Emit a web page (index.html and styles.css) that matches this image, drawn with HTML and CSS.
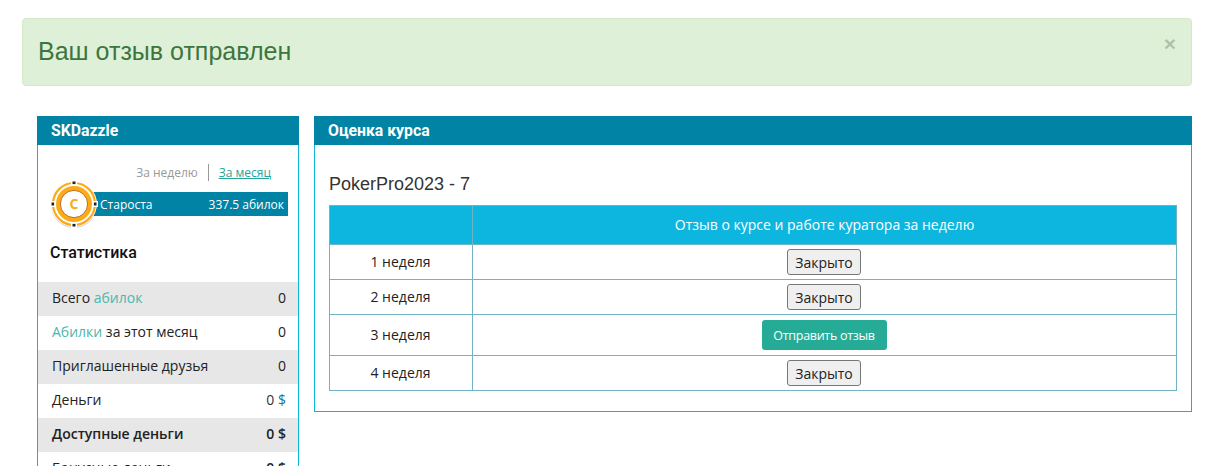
FILE: index.html
```html
<!DOCTYPE html>
<html lang="ru">
<head>
<meta charset="utf-8">
<title>Оценка курса</title>
<link rel="stylesheet" href="styles.css">
</head>
<body>
<div class="page">
  <div class="alert">
    <span class="alert-text">Ваш отзыв отправлен</span>
    <span class="alert-close">×</span>
  </div>
  <div class="columns">
    <aside class="panel side">
      <div class="panel-head">SKDazzle</div>
      <div class="tabs">
        <span class="tab">За неделю</span>
        <a class="tab tab-link">За месяц</a>
      </div>
      <div class="rank">
        <div class="rank-bar"><span>Староста</span><span>337.5 абилок</span></div>
        <svg class="chip" viewBox="0 0 48 48" width="48" height="48">
          <circle cx="24" cy="25" r="23" fill="#000" opacity=".18"/>
          <circle cx="24" cy="24" r="23" fill="#fff"/>
          <circle cx="24" cy="24" r="21" fill="none" stroke="#fbab18" stroke-width="2.2"/>
          <circle cx="24" cy="24" r="18" fill="#fbab18"/>
          <circle cx="24" cy="24" r="13.6" fill="#fff" stroke="#bf6d22" stroke-width="1"/>
          <rect x="21" y="0" width="6" height="5" fill="#fff"/>
          <rect x="21" y="43" width="6" height="5" fill="#fff"/>
          <rect x="0" y="21" width="5" height="6" fill="#fff"/>
          <rect x="43" y="21" width="5" height="6" fill="#fff"/>
          <rect x="22.5" y="1.5" width="3" height="2.6" fill="#222"/>
          <rect x="22.5" y="43.9" width="3" height="2.6" fill="#222"/>
          <rect x="1.5" y="22.5" width="2.6" height="3" fill="#222"/>
          <rect x="43.9" y="22.5" width="2.6" height="3" fill="#222"/>
          <text x="24" y="29" class="chip-letter" text-anchor="middle">C</text>
        </svg>
      </div>
      <h4 class="stat-title">Статистика</h4>
      <ul class="stats">
        <li class="stat grey"><span>Всего <a class="accent">абилок</a></span><span>0</span></li>
        <li class="stat"><span><a class="accent">Абилки</a> за этот месяц</span><span>0</span></li>
        <li class="stat grey"><span>Приглашенные друзья</span><span>0</span></li>
        <li class="stat"><span>Деньги</span><span class="money">0 <a class="blue">$</a></span></li>
        <li class="stat grey strong"><span>Доступные деньги</span><span>0 $</span></li>
        <li class="stat"><span>Бонусные деньги</span><span class="strong">0 $</span></li>
      </ul>
    </aside>
    <main class="panel main">
      <div class="panel-head">Оценка курса</div>
      <div class="panel-body">
        <h3 class="course">PokerPro2023 - 7</h3>
        <table class="weeks">
          <thead>
            <tr><th class="col-week"></th><th>Отзыв о курсе и работе куратора за неделю</th></tr>
          </thead>
          <tbody>
            <tr><td>1 неделя</td><td><button class="btn-closed">Закрыто</button></td></tr>
            <tr><td>2 неделя</td><td><button class="btn-closed">Закрыто</button></td></tr>
            <tr><td>3 неделя</td><td><button class="btn-send">Отправить отзыв</button></td></tr>
            <tr><td>4 неделя</td><td><button class="btn-closed">Закрыто</button></td></tr>
          </tbody>
        </table>
      </div>
    </main>
  </div>
</div>
</body>
</html>
```
FILE: styles.css
```css
* { box-sizing: border-box; }
html, body { margin: 0; height: 466px; overflow: hidden; background: #fff; }
body { font-family: "Open Sans", sans-serif; font-size: 14px; color: #222; }
.page { padding: 18px 25px 0 22px; }
.alert {
  height: 68px; display: flex; align-items: center; justify-content: space-between;
  padding: 0 15px; background: #dff0d8; border: 1px solid #d6e9c6; border-radius: 4px; color: #3c763d;
}
.alert-text { font-family: "Liberation Sans", sans-serif; font-size: 25px; padding-bottom: 1px; }
.alert-close { font-family: "Liberation Sans", sans-serif; font-size: 21px; font-weight: 700; color: #000; opacity: .2; margin: -16px 0 0; }
.columns { display: flex; gap: 15px; margin: 30px 0 0 15px; align-items: flex-start; }
.panel { border: 1px solid #0db6de; background: #fff; }
.side { width: 262px; flex: none; }
.main { flex: 1; height: 296px; }
.panel-head {
  height: 29px; margin: -1px -1px 0; padding: 0 14px; background: #0083a5; color: #fff;
  font-family: Roboto, sans-serif; font-weight: 700; font-size: 15.8px; line-height: 29px;
}
.tabs { display: flex; justify-content: flex-end; padding: 19px 27px 0 0; height: 36px; font-size: 12px; }
.tab { color: #999; line-height: 18px; padding: 0 10px; }
.tab-link { color: #26a69a; text-decoration: underline; border-left: 1px solid #999; padding-right: 0; }
.rank { position: relative; margin: 11px 10px 0 12px; height: 24px; padding-left: 30px; }
.chip { position: absolute; left: 0; top: -12px; }
.chip-letter { font-weight: 700; font-size: 14px; fill: #fbab18; }
.rank-bar {
  height: 24px; background: #0083a5; color: #fff; display: flex; justify-content: space-between;
  align-items: center; font-size: 12px; padding: 0 4px 0 20px;
}
.stat-title { margin: 28px 0 0 12px; font-family: Roboto, sans-serif; font-weight: 500; font-size: 16px; line-height: 18px; color: #111; }
.stats { list-style: none; margin: 20px 0 0; padding: 0; }
.stat { height: 34px; display: flex; align-items: center; justify-content: space-between; padding: 0 12px 4px 14px; }
.grey { background: #e7e7e7; }
.strong { font-weight: 600; }
.accent { color: #4db6ac; }
.blue { color: #2b6f8f; }
.money { color: #333; }
.panel-body { padding: 29px 14px 0; }
.course { margin: 0; font-family: "Liberation Sans", sans-serif; font-weight: 400; font-size: 18px; line-height: 20px; color: #333; }
.weeks { width: 100%; margin-top: 11px; border-collapse: collapse; border: 1px solid #6fb3c5; }
.weeks th { height: 39px; padding: 0 0 2px; background: #0db6de; color: #fff; font-weight: 400; border-left: 1px solid #6fb3c5; border-bottom: 1px solid #6fb3c5; text-align: center; }
.weeks th:first-child { border-left: 0; }
.col-week { width: 143px; }
.weeks td { text-align: center; padding: 4px 1px 4px 0; border: 1px solid #6fb3c5; line-height: 20px; }
.btn-closed, .btn-send { font-family: "Open Sans", sans-serif; font-size: 14px; display: block; margin: 0 auto; }
.btn-closed { width: 74px; height: 26px; padding: 0; background: #efefef; color: #222; border: 1px solid #767676; border-radius: 3px; }
.btn-send { width: 125px; height: 30px; margin: 1px auto; padding: 0; background: #26ab96; color: #fff; border: 0; border-radius: 3px; font-size: 12.5px; letter-spacing: -.3px; }
```
